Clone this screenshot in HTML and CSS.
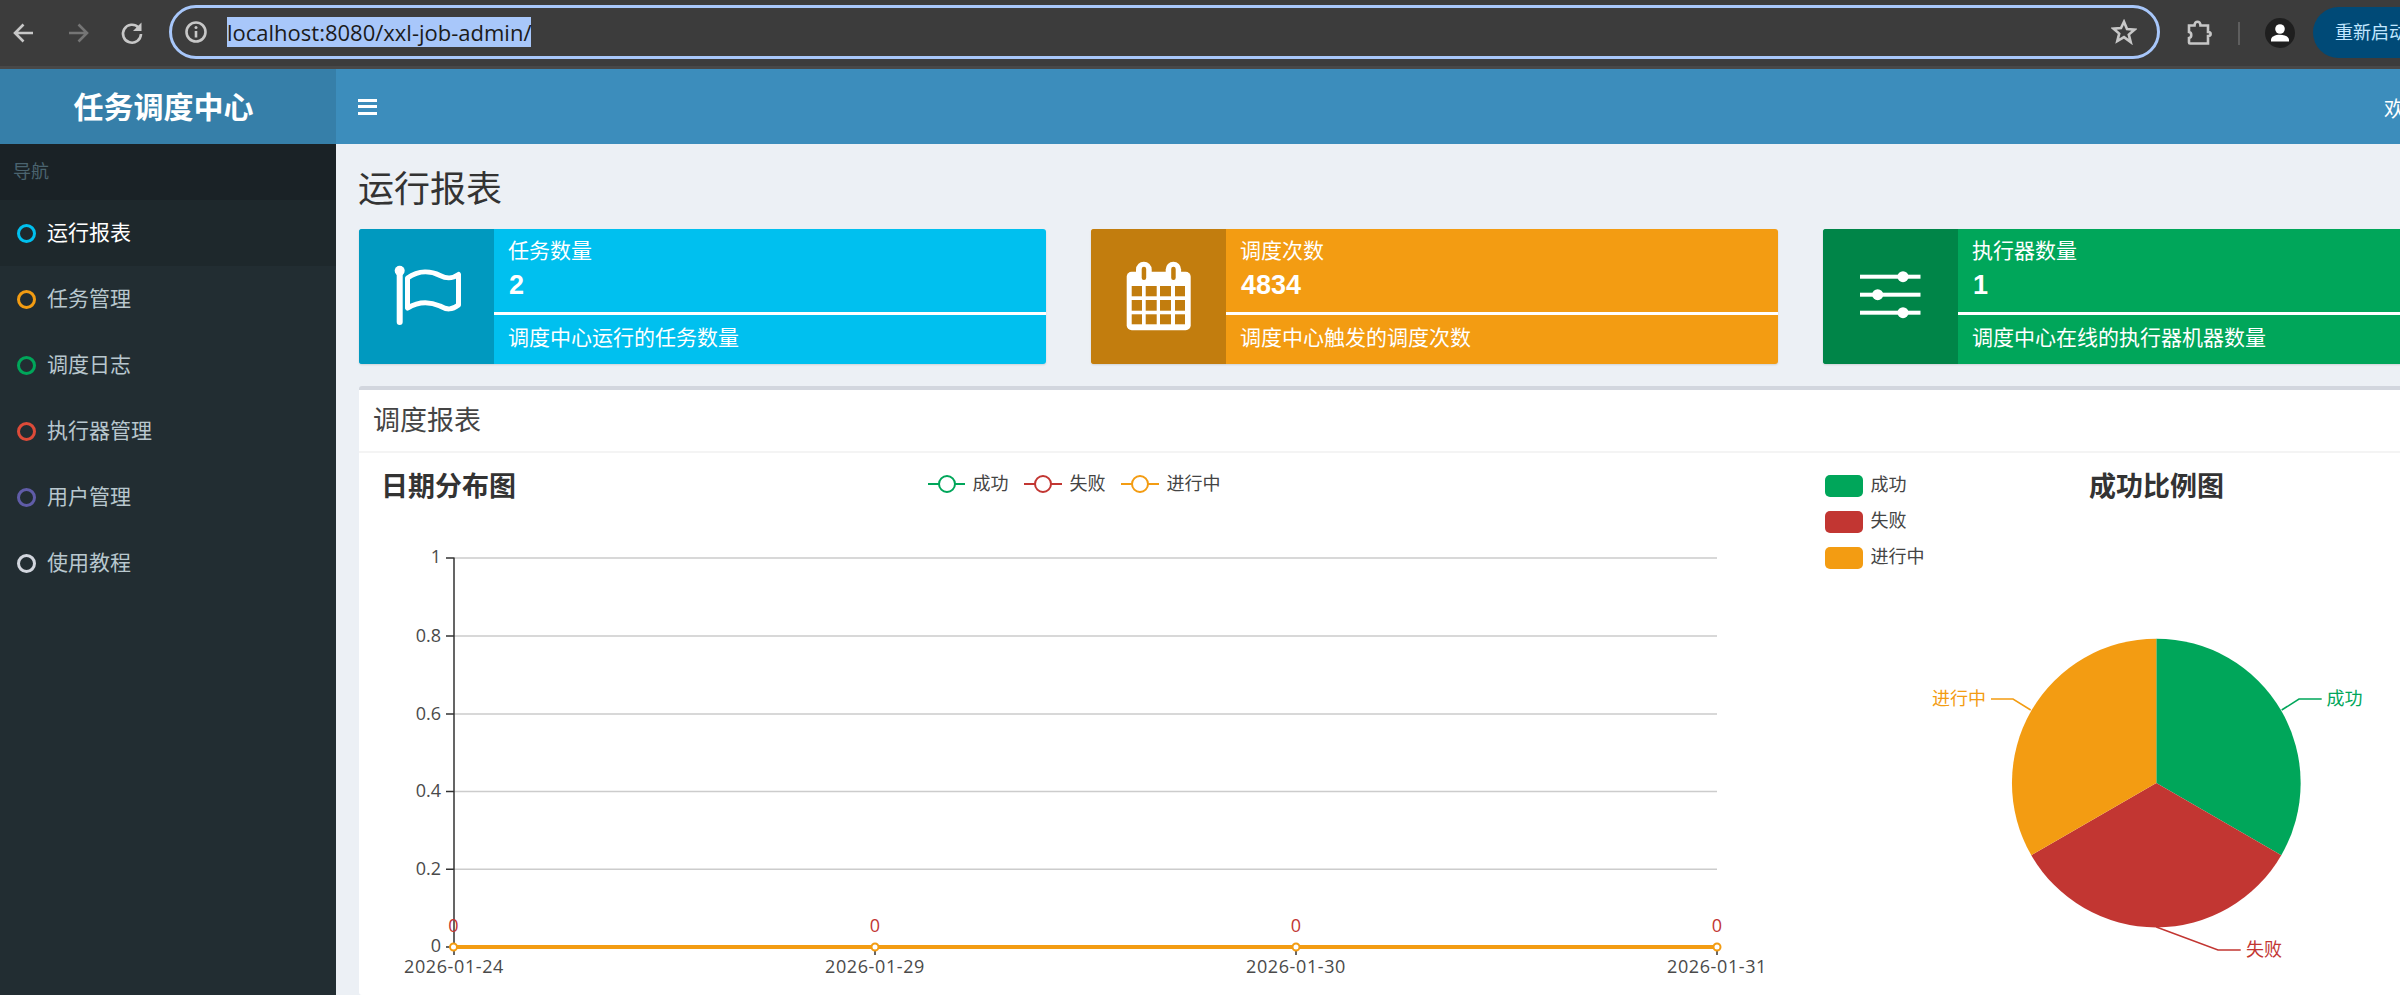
FILE: index.html
```html
<!DOCTYPE html>
<html lang="zh-CN">
<head>
<meta charset="utf-8">
<title>任务调度中心</title>
<link rel="stylesheet" href="styles.css">
</head>
<body>
<div class="toolbar">
  <div class="nav-btns">
    <svg class="tb-icon" viewBox="0 0 36 36"><path class="ic-light" d="M27 18H10M17.5 9.5 9 18l8.500 8.500"/></svg>
    <svg class="tb-icon" viewBox="0 0 36 36"><path class="ic-dim" d="M9 18h17M18.500 9.500 27 18l-8.500 8.500"/></svg>
    <svg class="tb-icon" viewBox="0 0 36 36"><path class="ic-light" d="M24.500 12.500A9 9 0 1 0 27 19"/><path class="ic-fill" d="M27.500 7.500v8.500H19z"/></svg>
  </div>
  <div class="omnibox">
    <svg class="omni-info" viewBox="0 0 24 24"><circle class="ic-light" cx="12" cy="12" r="9.500"/><path class="ic-light" d="M12 11v6.500"/><circle class="ic-fill" cx="12" cy="7.500" r="1.500"/></svg>
    <span class="url">localhost:8080/xxl-job-admin/</span>
    <svg class="omni-star" viewBox="0 0 26 26"><path class="ic-light" d="M13 2.800l3 7.200 7.700.6-5.900 5 1.900 7.500L13 18.100l-6.700 4 1.900-7.500-5.900-5 7.700-.6z"/></svg>
  </div>
  <svg class="tb-puzzle" viewBox="0 0 26 26"><path class="ic-light" d="M2 5.500h5.500c0-5 6-5 6 0h7.500v6.500c3.500 0 3.500 4 0 4v7.500H3c-1 0-1-1-1-1v-4.500c3-.5 3-5.500 0-6z"/></svg>
  <span class="tb-divider"></span>
  <span class="avatar"><svg viewBox="0 0 30 30"><circle class="ic-white" cx="15" cy="11" r="4.800"/><path class="ic-white" d="M6 23.500v-1.700c0-3 4-5 9-5s9 2 9 5v1.700z"/></svg></span>
  <span class="restart">重新启动</span>
</div>

<div class="app">
  <aside class="sidebar">
    <div class="logo">任务调度中心</div>
    <div class="menu-title">导航</div>
    <ul class="menu">
      <li class="menu-item active"><span class="dot dot-aqua"></span><span class="menu-text">运行报表</span></li>
      <li class="menu-item"><span class="dot dot-yellow"></span><span class="menu-text">任务管理</span></li>
      <li class="menu-item"><span class="dot dot-green"></span><span class="menu-text">调度日志</span></li>
      <li class="menu-item"><span class="dot dot-red"></span><span class="menu-text">执行器管理</span></li>
      <li class="menu-item"><span class="dot dot-purple"></span><span class="menu-text">用户管理</span></li>
      <li class="menu-item"><span class="dot dot-gray"></span><span class="menu-text">使用教程</span></li>
    </ul>
  </aside>

  <main class="main">
    <header class="navbar">
      <span class="toggle"><i></i><i></i><i></i></span>
      <span class="nav-user">欢迎 admin</span>
    </header>
    <section class="content">
      <h1 class="page-title">运行报表</h1>
      <div class="info-row">
        <div class="info-box bg-aqua">
          <div class="info-icon">
            <svg viewBox="0 0 135 135"><circle class="ic-white" cx="40.700" cy="41.700" r="5"/><path class="stroke-white pole" d="M40.700 42V93"/><path class="stroke-white flag" d="M48.500 49C60 41 72 42 81 46.500C88 50 93 50 99.500 45.500V76C93 81 88 81 81 77C72 73 60 72 48.500 79Z"/></svg>
          </div>
          <div class="info-body">
            <div class="info-top"><div class="info-label">任务数量</div><div class="info-number">2</div></div>
            <div class="info-bar"></div>
            <div class="info-desc">调度中心运行的任务数量</div>
          </div>
        </div>
        <div class="info-box bg-yellow">
          <div class="info-icon">
            <svg viewBox="0 0 135 135">
              <rect class="ic-white" x="35.700" y="42.700" width="64" height="58.500" rx="5"/>
              <rect class="ic-white" x="45" y="32.700" width="15.700" height="24" rx="7.800"/><rect class="ic-white" x="74.700" y="32.700" width="15.400" height="24" rx="7.700"/>
              <g class="cal-cut"><rect x="50.700" y="37.700" width="4.500" height="13.300" rx="2.200"/><rect x="80.200" y="37.700" width="4.500" height="13.300" rx="2.200"/>
              <rect x="40.700" y="57" width="10.300" height="10.300"/><rect x="54.700" y="57" width="11" height="10.300"/><rect x="69" y="57" width="11" height="10.300"/><rect x="84" y="57" width="10" height="10.300"/>
              <rect x="40.700" y="71" width="10.300" height="10.700"/><rect x="54.700" y="71" width="11" height="10.700"/><rect x="69" y="71" width="11" height="10.700"/><rect x="84" y="71" width="10" height="10.700"/>
              <rect x="40.700" y="85.300" width="10.300" height="10"/><rect x="54.700" y="85.300" width="11" height="10"/><rect x="69" y="85.300" width="11" height="10"/><rect x="84" y="85.300" width="10" height="10"/></g>
            </svg>
          </div>
          <div class="info-body">
            <div class="info-top"><div class="info-label">调度次数</div><div class="info-number">4834</div></div>
            <div class="info-bar"></div>
            <div class="info-desc">调度中心触发的调度次数</div>
          </div>
        </div>
        <div class="info-box bg-green">
          <div class="info-icon">
            <svg viewBox="0 0 135 135">
              <rect class="ic-white" x="37" y="45.700" width="60.500" height="4"/><rect class="ic-white" x="37" y="63.700" width="60.500" height="4"/><rect class="ic-white" x="37" y="81.700" width="60.500" height="4"/>
              <circle class="ic-white" cx="80" cy="47.700" r="5.500"/><circle class="ic-white" cx="54.700" cy="65.700" r="5.500"/><circle class="ic-white" cx="80" cy="83.700" r="5.500"/>
            </svg>
          </div>
          <div class="info-body">
            <div class="info-top"><div class="info-label">执行器数量</div><div class="info-number">1</div></div>
            <div class="info-bar"></div>
            <div class="info-desc">调度中心在线的执行器机器数量</div>
          </div>
        </div>
      </div>

      <div class="panel">
        <div class="panel-head">调度报表</div>
        <div class="panel-body">
          <svg class="chart-line" viewBox="359 453 1441 542">
            <text class="ch-title" x="381" y="496">日期分布图</text>

            <path class="lg-green" d="M928 484H965"/><circle class="lg-green lg-c" cx="947" cy="484" r="8"/>
            <text class="ch-legend" x="972.500" y="489.500">成功</text>
            <path class="lg-red" d="M1024 484H1062"/><circle class="lg-red lg-c" cx="1043" cy="484" r="8"/>
            <text class="ch-legend" x="1069.500" y="489.500">失败</text>
            <path class="lg-orange" d="M1121 484H1159"/><circle class="lg-orange lg-c" cx="1140" cy="484" r="8"/>
            <text class="ch-legend" x="1166.500" y="489.500">进行中</text>

            <path class="grid" d="M454 558H1717M454 636H1717M454 714H1717M454 791.500H1717M454 869.200H1717"/>
            <path class="axis" d="M454 557.500V947M446 558H454M446 636H454M446 714H454M446 791.500H454M446 869.200H454M446 947H454M454 947V955M875 947V955M1296 947V955M1717 947V955"/>

            <text class="ch-tick" x="441" y="563" text-anchor="end">1</text>
            <text class="ch-tick" x="441" y="641.500" text-anchor="end">0.8</text>
            <text class="ch-tick" x="441" y="719.500" text-anchor="end">0.6</text>
            <text class="ch-tick" x="441" y="797" text-anchor="end">0.4</text>
            <text class="ch-tick" x="441" y="874.500" text-anchor="end">0.2</text>
            <text class="ch-tick" x="441" y="952" text-anchor="end">0</text>

            <text class="ch-tick ch-date" x="454" y="973" text-anchor="middle">2026-01-24</text>
            <text class="ch-tick ch-date" x="875" y="973" text-anchor="middle">2026-01-29</text>
            <text class="ch-tick ch-date" x="1296" y="973" text-anchor="middle">2026-01-30</text>
            <text class="ch-tick ch-date" x="1717" y="973" text-anchor="middle">2026-01-31</text>

            <text class="ch-val" x="453.500" y="932" text-anchor="middle">0</text>
            <text class="ch-val" x="875" y="932" text-anchor="middle">0</text>
            <text class="ch-val" x="1296" y="932" text-anchor="middle">0</text>
            <text class="ch-val" x="1717" y="932" text-anchor="middle">0</text>

            <path class="series" d="M454 947H1717"/>
            <circle class="pt" cx="453.500" cy="947" r="3.500"/><circle class="pt" cx="875" cy="947" r="3.500"/><circle class="pt" cx="1296" cy="947" r="3.500"/><circle class="pt" cx="1717" cy="947" r="3.500"/>
          </svg>
          <svg class="chart-pie" viewBox="1800 453 600 542">
            <rect class="fill-green" x="1825" y="475" width="38" height="22" rx="5"/>
            <text class="ch-legend" x="1870.500" y="491">成功</text>
            <rect class="fill-red" x="1825" y="511" width="38" height="22" rx="5"/>
            <text class="ch-legend" x="1870.500" y="527">失败</text>
            <rect class="fill-orange" x="1825" y="547" width="38" height="22" rx="5"/>
            <text class="ch-legend" x="1870.500" y="563">进行中</text>
            <text class="ch-title" x="2089" y="496">成功比例图</text>

            <path class="fill-green" d="M2156.300 783V638.700A144.300 144.300 0 0 1 2281.300 855.200Z"/>
            <path class="fill-red" d="M2156.300 783L2281.300 855.200A144.300 144.300 0 0 1 2031.300 855.200Z"/>
            <path class="fill-orange" d="M2156.300 783L2031.300 855.200A144.300 144.300 0 0 1 2156.300 638.700Z"/>

            <path class="lead-green" d="M2281.700 710L2299 699H2321.700"/>
            <path class="lead-red" d="M2156.300 927L2218 950H2240.700"/>
            <path class="lead-orange" d="M2030.700 710L2013 699H1991"/>
            <text class="lab-green" x="2326.500" y="705">成功</text>
            <text class="lab-red" x="2246" y="956">失败</text>
            <text class="lab-orange" x="1932" y="705">进行中</text>
          </svg>
        </div>
      </div>
    </section>
  </main>
</div>
</body>
</html>
```

FILE: styles.css
```css
* { box-sizing: border-box; }
html, body { margin: 0; height: 995px; overflow: hidden; }
body {
  width: 2400px;
  font-family: "Liberation Sans", "Noto Sans CJK SC", sans-serif;
  background: #ecf0f5;
  color: #333;
}

/* Browser chrome */
.toolbar {
  display: flex;
  align-items: center;
  height: 69px;
  padding-left: 6px;
  background: #3c3c3c;
  border-bottom: 3px solid #484848;
  overflow: hidden;
}
.nav-btns { display: flex; gap: 18px; flex-shrink: 0; }
.tb-icon { width: 36px; height: 36px; display: block; }
.ic-light { fill: none; stroke: #c7c7c7; stroke-width: 2.6; }
.ic-dim { fill: none; stroke: #757575; stroke-width: 2.6; }
.ic-fill { fill: #c7c7c7; }
.ic-white { fill: #fff; }
.omnibox {
  display: flex;
  align-items: center;
  flex-shrink: 0;
  width: 1991px;
  height: 54px;
  margin: 0 0 2px 19px;
  padding: 0 20px 0 12px;
  border: 3px solid #a8c7fa;
  border-radius: 27px;
  background: #3c3c3c;
}
.omni-info { width: 24px; height: 24px; flex-shrink: 0; }
.url {
  margin-left: 19px;
  height: 30px;
  font: 400 22px/30px "Open Sans", "Noto Sans", sans-serif;
  color: #1b1b1b;
  background: #a8c7fa;
}
.omni-star { width: 26px; height: 26px; margin-left: auto; flex-shrink: 0; }
.tb-puzzle { width: 26px; height: 26px; margin-left: 27px; flex-shrink: 0; }
.tb-divider { width: 2px; height: 23px; margin-left: 25px; background: #5e5e5e; flex-shrink: 0; }
.avatar { width: 30px; height: 30px; margin-left: 25px; border-radius: 50%; background: #1f1f1f; flex-shrink: 0; }
.avatar svg { display: block; width: 30px; height: 30px; }
.restart {
  flex-shrink: 0;
  width: 130px;
  height: 51px;
  margin: 0 0 1px 18px;
  padding-left: 22px;
  border-radius: 26px;
  background: #004a77;
  color: #c2e7ff;
  font: 400 18px/49px "Noto Sans CJK SC", sans-serif;
  white-space: nowrap;
}

/* App shell */
.app { display: flex; height: 926px; }
.sidebar { width: 336px; flex-shrink: 0; background: #222d32; }
.logo {
  height: 75px;
  padding-right: 9px;
  background: #367fa9;
  color: #fff;
  font: 700 30px/72px "Noto Sans CJK SC", sans-serif;
  text-align: center;
}
.menu-title {
  height: 56px;
  padding-left: 13px;
  background: #1a2226;
  color: #4b646f;
  font: 400 18px/53px "Noto Sans CJK SC", sans-serif;
}
.menu { margin: 0; padding: 0; list-style: none; }
.menu-item {
  display: flex;
  align-items: center;
  gap: 11px;
  height: 66px;
  padding-left: 17px;
  color: #b8c7ce;
  font: 400 21px "Noto Sans CJK SC", sans-serif;
}
.menu-text { margin-bottom: 5px; }
.menu-item.active { background: #1e282c; color: #fff; }
.dot { width: 19px; height: 19px; border: 3px solid; border-radius: 50%; flex-shrink: 0; }
.dot-aqua { border-color: #00c0ef; }
.dot-yellow { border-color: #f39c12; }
.dot-green { border-color: #00a65a; }
.dot-red { border-color: #dd4b39; }
.dot-purple { border-color: #605ca8; }
.dot-gray { border-color: #d2d6de; }

.main { flex: 1; min-width: 0; display: flex; flex-direction: column; overflow: hidden; }
.navbar {
  display: flex;
  align-items: center;
  flex-shrink: 0;
  height: 75px;
  padding-left: 22px;
  background: #3c8dbc;
  overflow: hidden;
}
.toggle { display: flex; flex-direction: column; gap: 3.500px; width: 19px; }
.toggle i { display: block; height: 3px; background: #fff; }
.nav-user {
  margin-left: auto;
  width: 16px;
  color: #fff;
  font: 400 21px "Noto Sans CJK SC", sans-serif;
  white-space: nowrap;
}

.content { flex: 1; padding-left: 23px; }
.page-title {
  height: 85px;
  margin: 0 0 0 -1px;
  padding-top: 17px;
  font: 400 36px/51px "Noto Sans CJK SC", sans-serif;
  color: #333;
}

/* Info boxes */
.info-row { display: grid; grid-template-columns: repeat(3, 687px); gap: 45px; }
.info-box {
  display: flex;
  height: 135px;
  border-radius: 3px;
  overflow: hidden;
  color: #fff;
  box-shadow: 0 1px 2px rgba(0, 0, 0, .12);
}
.bg-aqua { background: #00c0ef; }
.bg-yellow { background: #f39c12; }
.bg-green { background: #00a65a; }
.info-icon { width: 135px; flex-shrink: 0; }
.info-icon svg { display: block; width: 135px; height: 135px; }
.bg-aqua .info-icon { background: #0099bf; }
.bg-yellow .info-icon { background: #c27d0e; }
.bg-green .info-icon { background: #008548; }
.stroke-white { fill: none; stroke: #fff; }
.pole { stroke-width: 6; stroke-linecap: round; }
.flag { stroke-width: 5; stroke-linejoin: round; }
.cal-cut rect { fill: #c27d0e; }
.info-body { flex: 1; display: flex; flex-direction: column; }
.info-top { height: 83px; padding: 5px 14px 0; }
.info-label { font: 400 21px/30px "Noto Sans CJK SC", sans-serif; }
.info-number { margin: 3px 0 0 1px; font: 700 27px/36px "Liberation Sans", sans-serif; }
.info-bar { height: 3px; background: #fff; }
.info-desc { padding-left: 14px; font: 400 21px/43px "Noto Sans CJK SC", sans-serif; }

/* Report panel */
.panel {
  width: 2151px;
  margin-top: 22px;
  border-top: 4px solid #d2d6de;
  border-radius: 3px;
  background: #fff;
}
.panel-head {
  height: 63px;
  padding-left: 14px;
  border-bottom: 2px solid #f4f4f4;
  color: #444;
  font: 400 27px/58px "Noto Sans CJK SC", sans-serif;
}
.panel-body { display: flex; height: 542px; }
.chart-line { width: 1441px; height: 542px; flex-shrink: 0; display: block; }
.chart-pie { width: 600px; height: 542px; flex-shrink: 0; display: block; }

/* Chart marks */
.ch-title { font: 700 27px "Noto Sans CJK SC", sans-serif; fill: #333; }
.ch-legend { font: 400 18px "Noto Sans CJK SC", sans-serif; fill: #444; }
.ch-tick { font: 400 18px "Open Sans", "Noto Sans", sans-serif; fill: #4a4a4a; }
.ch-date { letter-spacing: .6px; }
.ch-val { font: 400 18px "Open Sans", "Noto Sans", sans-serif; fill: #c23632; }
.grid { fill: none; stroke: #ccc; stroke-width: 1.500; }
.axis { fill: none; stroke: #333; stroke-width: 1.500; }
.series { fill: none; stroke: #f39c12; stroke-width: 4; }
.pt { fill: #fff; stroke: #f39c12; stroke-width: 2; }
.lg-green { fill: none; stroke: #00a65a; stroke-width: 2; }
.lg-red { fill: none; stroke: #c23632; stroke-width: 2; }
.lg-orange { fill: none; stroke: #f39c12; stroke-width: 2; }
.lg-c { fill: #fff; }
.fill-green { fill: #00a65a; }
.fill-red { fill: #c23632; }
.fill-orange { fill: #f39c12; }
.lead-green { fill: none; stroke: #00a65a; stroke-width: 1.500; }
.lead-red { fill: none; stroke: #c23632; stroke-width: 1.500; }
.lead-orange { fill: none; stroke: #f39c12; stroke-width: 1.500; }
.lab-green { font: 400 18px "Noto Sans CJK SC", sans-serif; fill: #00a65a; }
.lab-red { font: 400 18px "Noto Sans CJK SC", sans-serif; fill: #c23632; }
.lab-orange { font: 400 18px "Noto Sans CJK SC", sans-serif; fill: #f39c12; }
```
